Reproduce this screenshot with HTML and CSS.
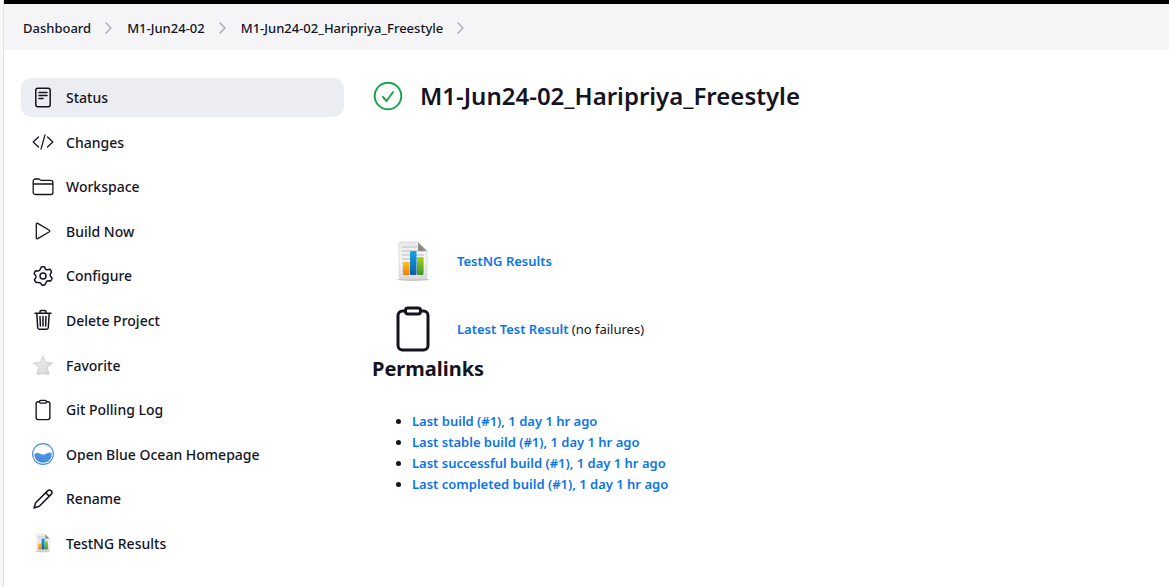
FILE: index.html
```html
<!DOCTYPE html>
<html lang="en">
<head>
<meta charset="utf-8">
<meta name="viewport" content="width=device-width, initial-scale=1">
<title>M1-Jun24-02_Haripriya_Freestyle</title>
<link rel="stylesheet" href="styles.css">
</head>
<body>
<svg class="defs" aria-hidden="true">
  <defs>
    <linearGradient id="paper" x1="0" y1="0" x2="0" y2="1"><stop offset="0" stop-color="#e9e9e9"/><stop offset=".5" stop-color="#f6f6f6"/><stop offset="1" stop-color="#d9d9d9"/></linearGradient>
    <linearGradient id="orange" x1="0" y1="0" x2="0" y2="1"><stop offset="0" stop-color="#ffc21a"/><stop offset="1" stop-color="#ee7c10"/></linearGradient>
    <linearGradient id="blue" x1="0" y1="0" x2="0" y2="1"><stop offset="0" stop-color="#16a5e8"/><stop offset="1" stop-color="#0a5ca8"/></linearGradient>
    <linearGradient id="green" x1="0" y1="0" x2="0" y2="1"><stop offset="0" stop-color="#a6d61c"/><stop offset="1" stop-color="#3a9430"/></linearGradient>
    <linearGradient id="fold" x1="0" y1="1" x2="1" y2="0"><stop offset="0" stop-color="#777"/><stop offset="1" stop-color="#bbb"/></linearGradient>
    <linearGradient id="silver" x1="0" y1="0" x2="1" y2="1"><stop offset="0" stop-color="#f2f2f2"/><stop offset="1" stop-color="#d6d6d6"/></linearGradient>
    <symbol id="report" viewBox="0 0 48 48">
      <ellipse cx="24" cy="42.500" rx="16" ry="1.500" fill="#c4c4c4"/>
      <path d="M11 5h18l9 9v25q0 3-3 3H13q-3 0-3-3V7q0-2 1-2z" fill="url(#paper)" stroke="#d2d2d2" stroke-width=".7"/>
      <path d="M13 10h15M13 14h22M13 18h22M13 22h22M13 26h22M13 30h22M13 34h22" stroke="#bcbcbc" stroke-width="1.2"/>
      <path d="M29 5v7q0 2 2 2h7z" fill="url(#fold)"/>
      <rect x="14" y="25" width="6.500" height="13" rx="1" fill="url(#orange)"/>
      <rect x="21" y="14" width="6.500" height="24" rx="1" fill="url(#blue)"/>
      <rect x="28" y="20" width="6.500" height="18" rx="1" fill="url(#green)"/>
    </symbol>
    <symbol id="clipboard" viewBox="0 0 512 512">
      <path d="M336 64h32a48 48 0 0148 48v320a48 48 0 01-48 48H144a48 48 0 01-48-48V112a48 48 0 0148-48h32" fill="none" stroke="currentColor" stroke-width="32" stroke-linejoin="round"/>
      <rect x="176" y="32" width="160" height="64" rx="26" fill="none" stroke="currentColor" stroke-width="32"/>
    </symbol>
    <symbol id="chevron" viewBox="0 0 12 12"><path d="M3 1l5 5-5 5" fill="none" stroke="currentColor" stroke-width="1.3" stroke-linecap="round" stroke-linejoin="round"/></symbol>
  </defs>
</svg>
<div class="page">
  <nav class="breadcrumbs" aria-label="Breadcrumb">
    <a href="#">Dashboard</a>
    <svg class="chevron"><use href="#chevron"/></svg>
    <a href="#">M1-Jun24-02</a>
    <svg class="chevron"><use href="#chevron"/></svg>
    <a href="#">M1-Jun24-02_Haripriya_Freestyle</a>
    <svg class="chevron"><use href="#chevron"/></svg>
  </nav>
  <div class="columns">
    <nav class="tasks" aria-label="Project">
      <a class="task task-active" href="#"><svg class="icon line" viewBox="0 0 22 22"><rect x="3.800" y="1.300" width="14.400" height="18.400" rx="2"/><path d="M7 5.500h8M7 8.500h8M7 11.500h4"/></svg>Status</a>
      <a class="task" href="#"><svg class="icon line thin" viewBox="0 0 22 22"><path d="M6.500 6L1.200 11l5.300 5M15.500 6l5.300 5-5.300 5M13 3.800L9 18.200"/></svg>Changes</a>
      <a class="task" href="#"><svg class="icon line thin" viewBox="0 0 22 22"><path d="M1.200 8V5a2 2 0 012-2h3.200q.8 0 1.400.5l.7.500q.6.400 1.400.4h9a2 2 0 012 2V16.500a2 2 0 01-2 2h-15.700a2 2 0 01-2-2V8H20.800"/></svg>Workspace</a>
      <a class="task" href="#"><svg class="icon line thin" viewBox="0 0 22 22"><path d="M4.300 4.200v13.600q0 1.500 1.400.8L17 12q1.500-1 0-2L5.700 3.400q-1.400-.7-1.400.8z"/></svg>Build Now</a>
      <a class="task" href="#"><svg class="icon line" viewBox="0 0 22 22"><circle cx="11" cy="11" r="3"/><path d="M9.300 2q1.700-.7 3.400 0l.7 2.200q1 .8 2.200.5l2.100-.5q1.500 1.200 1.800 2.900l-1.200 2q-.4 1 .2 2.200l1.600 1.700q-.2 1.700-1.500 3l-2.300-.2q-1.300 0-2 1.100L13.500 19q-1.200 1.500-3.300 1.300L8.700 18.400q-.8-1-2-.9l-2.400.1q-1.500-1.100-1.800-2.900l1.300-2q.5-1.100-.1-2.200L2.200 8.800q.1-1.900 1.500-3.100l2.300.2q1.300 0 1.900-1z"/></svg>Configure</a>
      <a class="task" href="#"><svg class="icon line" viewBox="0 0 22 22"><path d="M3 4.200h16M4.800 4.500l.9 14q.1 1.700 1.700 1.700h7.200q1.600 0 1.700-1.700l.9-14M8 4V2.700q0-1.200 1.200-1.200h3.600Q14 1.500 14 2.700V4M8 7.500l.4 9.500M11 7.500V17M14 7.500l-.4 9.500"/></svg>Delete Project</a>
      <a class="task" href="#"><svg class="icon" viewBox="0 0 22 22"><path d="M11 2l2.500 6.500 7 .5-5.300 4.300L17 20H5l1.800-6.700L1.500 9l7-.5z" fill="url(#silver)" stroke="#c6c6c6" stroke-width=".8" stroke-linejoin="round"/><path d="M5 20.200q6-2.500 12 0" fill="#fff" stroke="#bbb" stroke-width=".7"/></svg>Favorite</a>
      <a class="task" href="#"><svg class="icon"><use href="#clipboard"/></svg>Git Polling Log</a>
      <a class="task" href="#"><svg class="icon" viewBox="0 0 22 22"><circle cx="11" cy="11" r="10.400" fill="#fff" stroke="#4a90e2" stroke-width="1.100"/><path d="M2.200 11.500C6.500 7.800 8.500 12.500 12 11.500c3.500-1 4.500-3 7.800-1.500A8.800 8.800 0 0 1 11 19.800 8.800 8.800 0 0 1 2.200 11.500z" fill="#4a90e2"/></svg>Open Blue Ocean Homepage</a>
      <a class="task" href="#"><svg class="icon line" viewBox="0 0 22 22"><path d="M2 20l1.700-5.300L15.600 2.900q2-1.700 3.700-.2 1.500 1.700-.2 3.700L7.300 18.300zM14.300 4.200q.2 3 3.500 3.500"/></svg>Rename</a>
      <a class="task" href="#"><svg class="icon"><use href="#report"/></svg>TestNG Results</a>
    </nav>
    <main class="main">
      <header class="heading">
        <svg class="status" viewBox="0 0 32 32" role="img" aria-label="Success"><circle cx="16" cy="16" r="13.300"/><path d="M11 17l3.500 4L21 12"/></svg>
        <h1>M1-Jun24-02_Haripriya_Freestyle</h1>
      </header>
      <div class="results">
        <div class="result"><svg class="result-icon"><use href="#report"/></svg><a href="#">TestNG Results</a></div>
        <div class="result"><svg class="result-icon"><use href="#clipboard"/></svg><p><a href="#">Latest Test Result</a> (no failures)</p></div>
      </div>
      <h2>Permalinks</h2>
      <ul class="permalinks">
        <li><a href="#">Last build (#1), 1 day 1 hr ago</a></li>
        <li><a href="#">Last stable build (#1), 1 day 1 hr ago</a></li>
        <li><a href="#">Last successful build (#1), 1 day 1 hr ago</a></li>
        <li><a href="#">Last completed build (#1), 1 day 1 hr ago</a></li>
      </ul>
    </main>
  </div>
</div>
</body>
</html>
```
FILE: styles.css
```css
* { box-sizing: border-box; }
body {
  margin: 0;
  padding-left: 3px;
  background: #f8f8f8;
  color: #14141f;
  font: 13px/21px "Noto Sans", "Open Sans", sans-serif;
}
a { color: #0b74ea; font-weight: 600; text-decoration: none; }
h1, h2, p { margin: 0; }
.defs { position: absolute; width: 0; height: 0; }
.page {
  min-height: 100vh;
  background: #fff;
  border-left: 1px solid #e0e0e0;
}
.breadcrumbs {
  display: flex;
  align-items: center;
  gap: 12px;
  height: 50px;
  padding: 2px 19px 0;
  border-top: 4px solid #000;
  background: #f5f5f8;
}
.breadcrumbs a { color: #14141f; font-weight: 500; }
.chevron { width: 12px; height: 12px; color: #a5a5b5; }
.columns {
  display: grid;
  grid-template-columns: 323px 1fr;
  gap: 28px;
  padding: 28px 17px 24px;
}
.tasks {
  display: flex;
  flex-direction: column;
  justify-content: space-between;
  height: 485px;
}
.task {
  display: flex;
  align-items: center;
  gap: 12px;
  height: 39px;
  padding: 0 11px;
  border-radius: 10px;
  color: #14141f;
  font-size: 14px;
  font-weight: 500;
}
.task-active { background: #ecedf3; }
.icon { flex: none; width: 22px; height: 22px; }
.line {
  fill: none;
  stroke: currentColor;
  stroke-width: 1.5;
  stroke-linecap: round;
  stroke-linejoin: round;
}
.thin { stroke-width: 1.3; }
.heading { display: flex; align-items: center; gap: 16px; height: 36px; }
h1 { font-size: 24px; line-height: 36px; font-weight: 600; }
.status {
  flex: none;
  width: 32px;
  height: 32px;
  fill: none;
  stroke: #1ea64b;
  stroke-width: 2;
  stroke-linecap: round;
  stroke-linejoin: round;
}
.results { display: grid; gap: 20px; padding: 123px 0 0 17px; }
.result { display: flex; align-items: center; gap: 20px; }
.result-icon { width: 48px; height: 48px; }
h2 { font-size: 20px; line-height: 32px; font-weight: 700; }
.permalinks { margin: 26px 0 0; padding-left: 40px; }
```
